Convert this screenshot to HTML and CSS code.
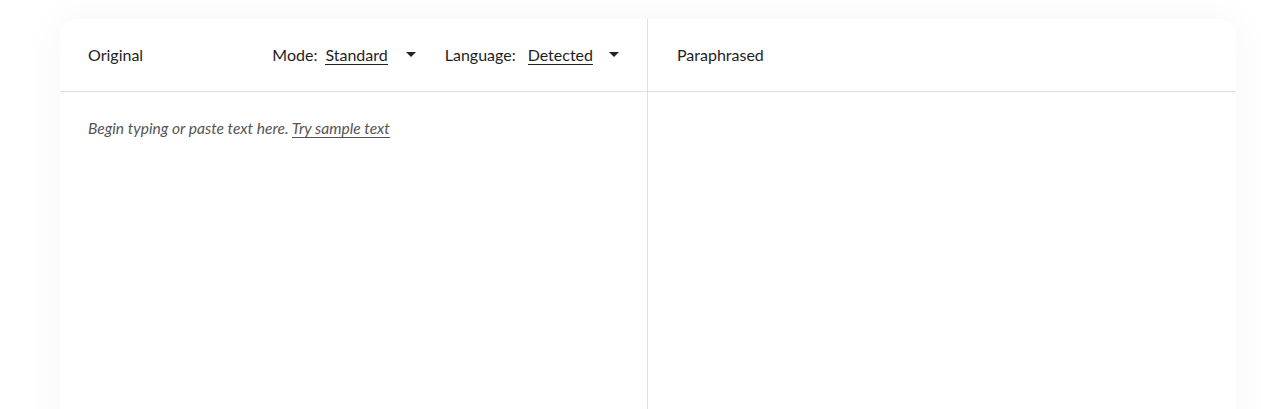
FILE: index.html
```html
<!DOCTYPE html>
<html>
<head>
<meta charset="utf-8">
<link rel="stylesheet" href="styles.css">
</head>
<body>
<div class="card">
  <div class="panel panel-left">
    <div class="header">
      <span class="title">Original</span>
      <div class="controls">
        <div class="select select-mode">
          <span class="label">Mode:</span>
          <span class="value">Standard</span>
          <svg class="caret" width="10" height="6" viewBox="0 0 10 6"><path d="M0 0H10L5 5Z" fill="#222"/></svg>
        </div>
        <div class="select select-lang">
          <span class="label">Language:</span>
          <span class="value">Detected</span>
          <svg class="caret" width="10" height="6" viewBox="0 0 10 6"><path d="M0 0H10L5 5Z" fill="#222"/></svg>
        </div>
      </div>
    </div>
    <div class="body">
      <p class="placeholder">Begin typing or paste text here. <span class="sample">Try sample text</span></p>
    </div>
  </div>
  <div class="panel panel-right">
    <div class="header">
      <span class="title">Paraphrased</span>
    </div>
    <div class="body"></div>
  </div>
</div>
</body>
</html>
```

FILE: styles.css
```css
html, body {
  margin: 0;
  padding: 0;
  background: #ffffff;
}
body {
  font-family: Lato, "Liberation Sans", sans-serif;
  color: #1e1e1e;
  overflow: hidden;
}
.card {
  margin: 19px 0 0 60px;
  width: 1176px;
  height: 600px;
  background: #fff;
  border-radius: 16px;
  box-shadow: 0 0 40px rgba(0, 0, 0, 0.045);
  display: flex;
}
.panel {
  display: flex;
  flex-direction: column;
  box-sizing: border-box;
}
.panel-left {
  flex: 0 0 588px;
  border-right: 1px solid #e0e0e0;
}
.panel-right {
  flex: 1;
}
.header {
  height: 73px;
  box-sizing: border-box;
  border-bottom: 1px solid #e0e0e0;
  display: flex;
  align-items: center;
  justify-content: space-between;
  padding: 0 28px 2px;
}
.panel-right .header {
  padding-left: 29px;
}
.title {
  font-size: 16px;
}
.controls {
  display: flex;
  gap: 29px;
  align-items: center;
}
.select {
  display: flex;
  align-items: center;
  font-size: 16px;
}
.label {
  margin-right: 8px;
}
.select-lang .label {
  margin-right: 12px;
}
.value {
  border-bottom: 1px solid #222;
  line-height: 19px;
  margin-top: 1px;
}
.caret {
  margin-left: 18px;
  margin-top: 1px;
}
.select-lang .caret {
  margin-left: 16px;
}
.body {
  padding: 27px 28px;
}
.placeholder {
  margin: 0;
  font-size: 15.6px;
  font-style: italic;
  color: #555;
}
.sample {
  border-bottom: 1px solid #555;
}
```
